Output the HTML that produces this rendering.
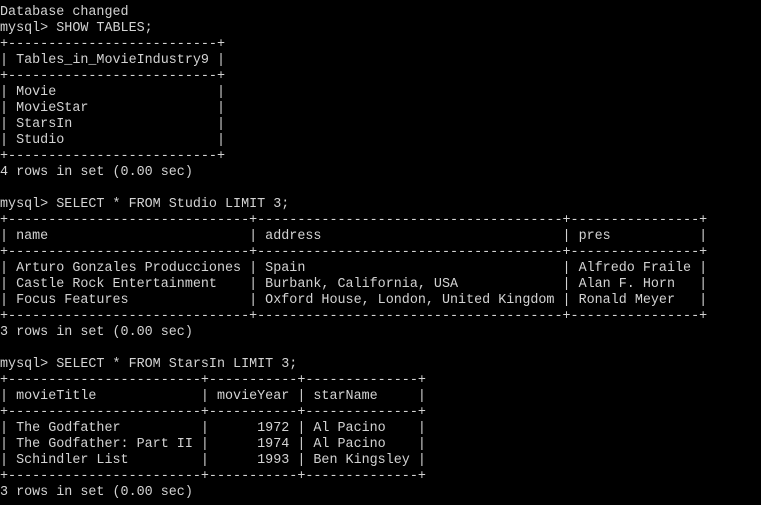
<!DOCTYPE html>
<html><head><meta charset="utf-8"><style>
html,body{margin:0;padding:0;background:#000;width:761px;height:505px;overflow:hidden}
pre{margin:0;padding:5px 0 0 0;font-family:"Liberation Mono","DejaVu Sans Mono",monospace;font-size:13.4px;line-height:16px;color:#d3d3d3;letter-spacing:0}
</style></head><body><pre>Database changed
mysql&gt; SHOW TABLES;
+--------------------------+
| Tables_in_MovieIndustry9 |
+--------------------------+
| Movie                    |
| MovieStar                |
| StarsIn                  |
| Studio                   |
+--------------------------+
4 rows in set (0.00 sec)

mysql&gt; SELECT * FROM Studio LIMIT 3;
+------------------------------+--------------------------------------+----------------+
| name                         | address                              | pres           |
+------------------------------+--------------------------------------+----------------+
| Arturo Gonzales Producciones | Spain                                | Alfredo Fraile |
| Castle Rock Entertainment    | Burbank, California, USA             | Alan F. Horn   |
| Focus Features               | Oxford House, London, United Kingdom | Ronald Meyer   |
+------------------------------+--------------------------------------+----------------+
3 rows in set (0.00 sec)

mysql&gt; SELECT * FROM StarsIn LIMIT 3;
+------------------------+-----------+--------------+
| movieTitle             | movieYear | starName     |
+------------------------+-----------+--------------+
| The Godfather          |      1972 | Al Pacino    |
| The Godfather: Part II |      1974 | Al Pacino    |
| Schindler List         |      1993 | Ben Kingsley |
+------------------------+-----------+--------------+
3 rows in set (0.00 sec)</pre></body></html>
